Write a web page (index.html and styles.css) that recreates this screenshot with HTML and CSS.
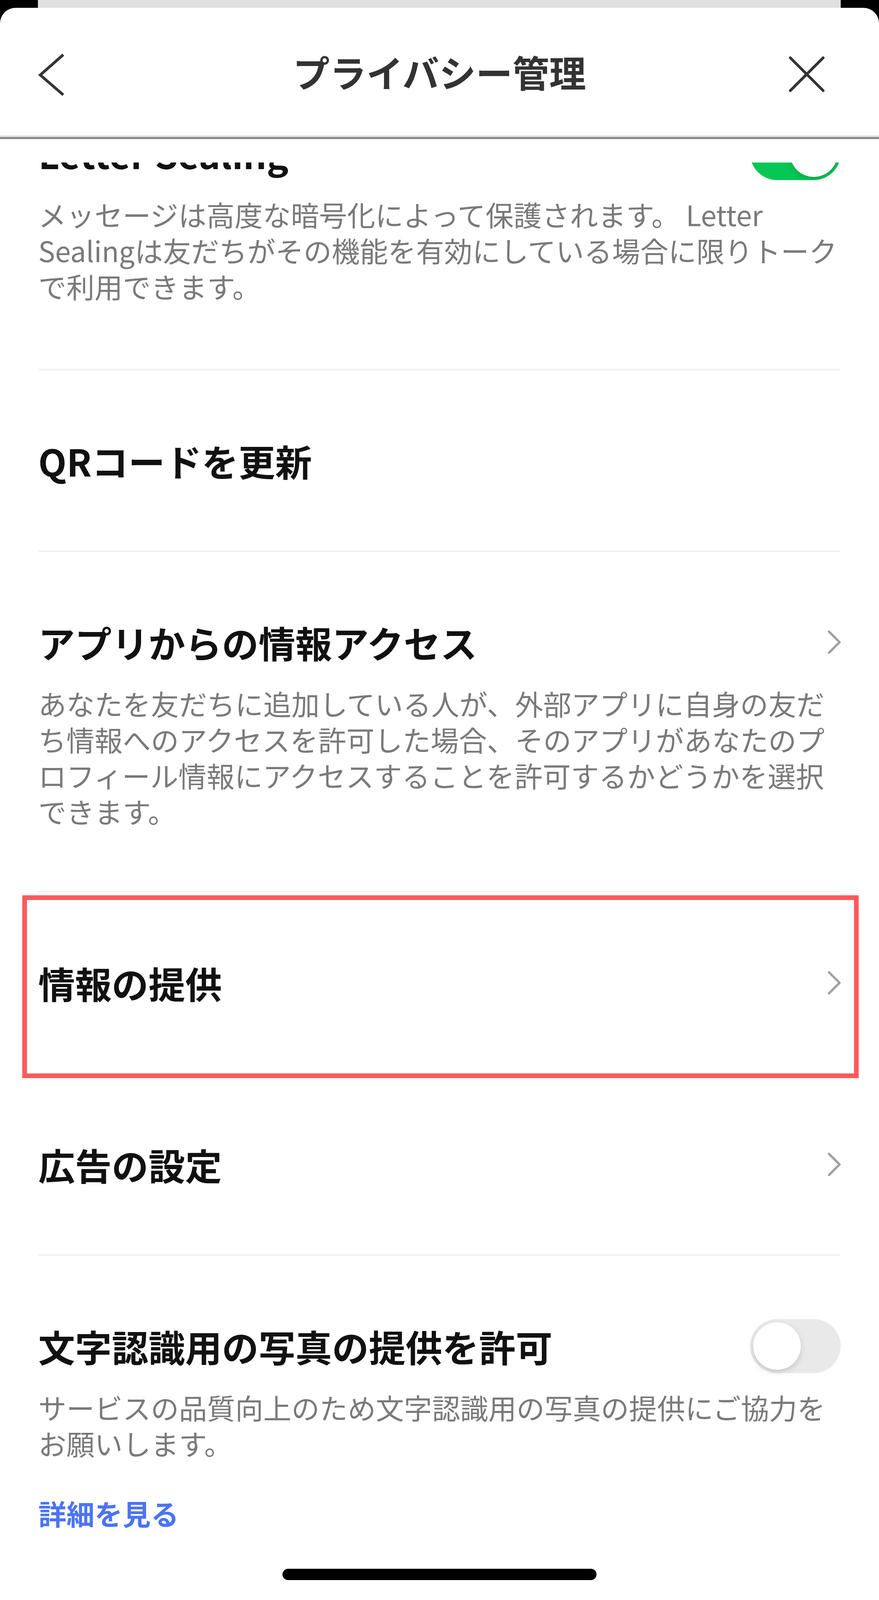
FILE: index.html
```html
<!DOCTYPE html>
<html lang="ja">
<head>
<meta charset="utf-8">
<title>プライバシー管理</title>
<link rel="stylesheet" href="styles.css">
</head>
<body>
<div class="backcard"></div>
<div class="sheet">
  <header class="nav">
    <button class="nav-btn back" aria-label="戻る">
      <svg width="70" height="110" viewBox="0 0 70 110"><polyline points="66,5 7,57 66,108" fill="none" stroke="#333" stroke-width="7"/></svg>
    </button>
    <h1 class="nav-title">プライバシー管理</h1>
    <button class="nav-btn close" aria-label="閉じる">
      <svg width="100" height="100" viewBox="0 0 100 100"><path d="M8 8 L92 92 M92 8 L8 92" fill="none" stroke="#333" stroke-width="7" stroke-linecap="round"/></svg>
    </button>
  </header>

  <main class="content">
    <div class="list">
      <section class="row has-desc first">
        <div class="row-head">
          <span class="row-title">Letter Sealing</span>
          <span class="switch on"><span class="knob"></span></span>
        </div>
        <p class="desc">メッセージは高度な暗号化によって保護されます。 Letter Sealingは友だちがその機能を有効にしている場合に限りトークで利用できます。</p>
      </section>
      <div class="sep"></div>

      <section class="row">
        <div class="row-head">
          <span class="row-title">QRコードを更新</span>
        </div>
      </section>
      <div class="sep"></div>

      <section class="row has-desc">
        <div class="row-head">
          <span class="row-title">アプリからの情報アクセス</span>
          <svg class="chev" width="36" height="62" viewBox="0 0 36 62"><polyline points="6,4 33,31 6,58" fill="none" stroke="#a0a0a0" stroke-width="6" stroke-linecap="round" stroke-linejoin="round"/></svg>
        </div>
        <p class="desc">あなたを友だちに追加している人が、外部アプリに自身の友だち情報へのアクセスを許可した場合、そのアプリがあなたのプロフィール情報にアクセスすることを許可するかどうかを選択できます。</p>
      </section>
      <div class="sep"></div>

      <section class="row highlight">
        <div class="row-head">
          <span class="row-title">情報の提供</span>
          <svg class="chev" width="36" height="62" viewBox="0 0 36 62"><polyline points="6,4 33,31 6,58" fill="none" stroke="#a0a0a0" stroke-width="6" stroke-linecap="round" stroke-linejoin="round"/></svg>
        </div>
        <div class="hl"></div>
      </section>
      <div class="sep"></div>

      <section class="row">
        <div class="row-head">
          <span class="row-title">広告の設定</span>
          <svg class="chev" width="36" height="62" viewBox="0 0 36 62"><polyline points="6,4 33,31 6,58" fill="none" stroke="#a0a0a0" stroke-width="6" stroke-linecap="round" stroke-linejoin="round"/></svg>
        </div>
      </section>
      <div class="sep"></div>

      <section class="row has-desc">
        <div class="row-head">
          <span class="row-title">文字認識用の写真の提供を許可</span>
          <span class="switch"><span class="knob"></span></span>
        </div>
        <p class="desc">サービスの品質向上のため文字認識用の写真の提供にご協力をお願いします。</p>
        <a class="more" href="#">詳細を見る</a>
      </section>
    </div>
  </main>

  <div class="home"></div>
</div>
</body>
</html>
```

FILE: styles.css
```css
html, body {
  margin: 0;
  padding: 0;
}

body {
  background: #000;
  font-family: "Noto Sans CJK JP", "Noto Sans", sans-serif;
}

.backcard {
  height: 20px;
  margin: 0 98px 0 97px;
  background: #e0e0e0;
}

.sheet {
  height: calc(100vh - 20px);
  background: #fff;
  border-radius: 40px 40px 0 0;
  display: flex;
  flex-direction: column;
  overflow: hidden;
}

.nav {
  flex: none;
  box-sizing: border-box;
  height: 336px;
  padding: 8px 96px 0;
  display: grid;
  grid-template-columns: 1fr auto 1fr;
  align-items: center;
  border-bottom: 5px solid #858585;
  box-shadow: inset 0 -4px 0 #dcdcdc;
}

.nav-btn {
  border: none;
  background: none;
  padding: 0;
  margin: 0;
  display: flex;
}

.nav-btn.back {
  justify-self: start;
}

.nav-btn.close {
  justify-self: end;
  margin-right: 39px;
}

.nav-title {
  margin: 0 0 14px;
  font-size: 94px;
  line-height: 1;
  font-weight: 700;
  color: #333;
  white-space: nowrap;
}

.content {
  flex: 1;
  min-height: 0;
  margin-top: 60px;
  overflow: hidden;
}

.list {
  margin-top: -248px;
  padding: 0 98px;
}

.sep {
  height: 4px;
  background: #f2f2f2;
}

.row {
  position: relative;
  padding: 166px 0 165px;
}

.row.has-desc {
  padding-bottom: 159px;
}

.row.first {
  padding-top: 159px;
  padding-bottom: 166px;
}

.row-head {
  display: flex;
  align-items: center;
  justify-content: space-between;
  height: 130px;
}

.row-title {
  font-size: 94px;
  line-height: 130px;
  font-weight: 700;
  color: #111;
  white-space: nowrap;
}

.chev {
  flex: none;
  overflow: visible;
}

.desc {
  margin: 45px 0 0;
  font-size: 72px;
  line-height: 92px;
  color: #7a7a7a;
}

.more {
  display: block;
  margin-top: 87px;
  font-size: 72px;
  line-height: 92px;
  font-weight: 700;
  color: #4b74f5;
  text-decoration: none;
}

.switch {
  flex: none;
  box-sizing: border-box;
  width: 232px;
  height: 138px;
  border-radius: 69px;
  background: #e9e9ea;
  padding: 0 8px;
  display: flex;
  align-items: center;
  justify-content: flex-start;
}

.switch.on {
  background: #06c755;
  justify-content: flex-end;
}

.knob {
  width: 122px;
  height: 122px;
  border-radius: 50%;
  background: #fff;
  box-shadow: 0 6px 16px rgba(0, 0, 0, 0.14), 0 2px 3px rgba(0, 0, 0, 0.06);
}

.hl {
  position: absolute;
  top: 7px;
  bottom: -14px;
  left: -41px;
  right: -46px;
  border: 12px solid #ff5a5a;
  pointer-events: none;
}

.home {
  flex: none;
  width: 804px;
  height: 29px;
  border-radius: 15px;
  background: #000;
  margin: 0 auto 51px;
}
```
